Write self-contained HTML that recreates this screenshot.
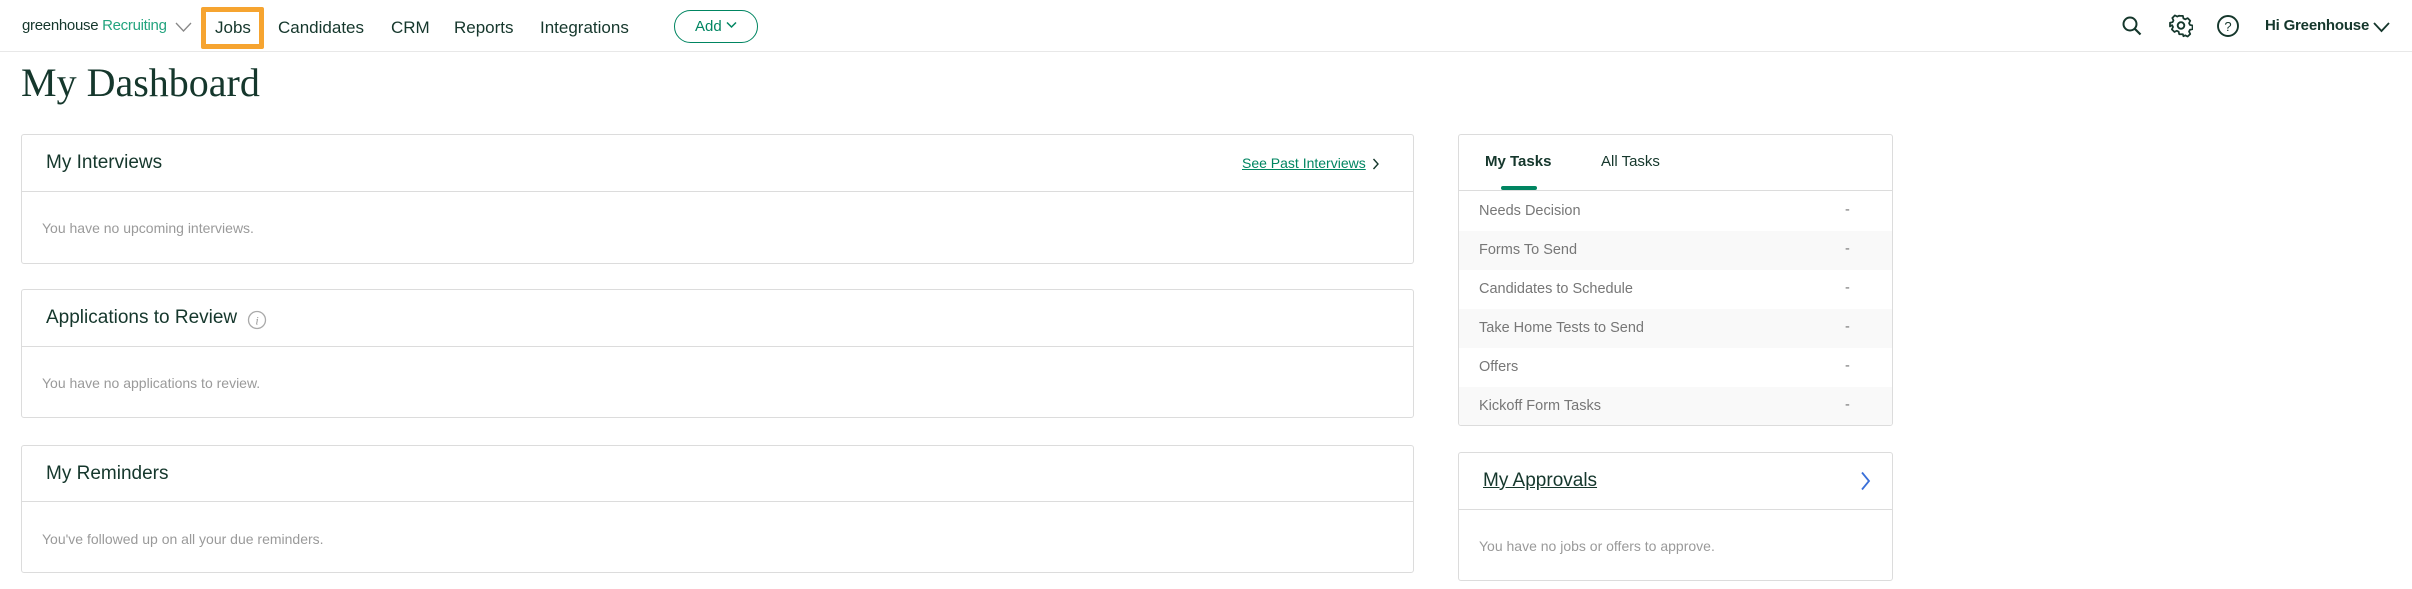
<!DOCTYPE html>
<html><head><meta charset="utf-8"><style>
*{margin:0;padding:0;box-sizing:border-box}
body{width:2412px;height:589px;background:#fff;font-family:"Liberation Sans",sans-serif;color:#15372c;position:relative;overflow:hidden}
.a{position:absolute;white-space:nowrap}
.nav{font-size:17px;top:18px;color:#15372c}
.card{position:absolute;border:1.5px solid #dcdcdc;border-radius:3px;background:#fff}
.hd{position:absolute;left:0;right:0;border-top:1.5px solid #dcdcdc}
.ttl{font-size:19px;color:#15372c}
.bt{font-size:14px;color:#9a9a9a}
.row{position:absolute;left:0;right:0;height:39px;font-size:14.5px;color:#777}
.row span{position:absolute;left:20px;top:11px}
.row b{position:absolute;left:386px;top:10px;font-weight:normal}
</style></head><body>
<div class="a" style="left:22px;top:17px;font-size:15px;letter-spacing:-0.3px"><span style="color:#15372c">greenhouse</span> <span style="color:#24a47f">Recruiting</span></div>
<svg class="a" style="left:175px;top:21px" width="17" height="12"><path d="M1 2 L8.5 10 L16 2" fill="none" stroke="#888" stroke-width="1.3"/></svg>
<div class="a" style="left:201px;top:7px;width:63px;height:42px;border:5px solid #f6a430;border-radius:2px"></div>
<div class="a nav" style="left:215px">Jobs</div>
<div class="a nav" style="left:278px">Candidates</div>
<div class="a nav" style="left:391px">CRM</div>
<div class="a nav" style="left:454px">Reports</div>
<div class="a nav" style="left:540px">Integrations</div>
<div class="a" style="left:674px;top:10px;width:84px;height:33px;border:1.5px solid #008561;border-radius:17px;color:#008561;font-size:15px;padding:7px 0 0 20px">Add <svg width="11" height="8" style="vertical-align:2px"><path d="M1 1.5 L5.5 6 L10 1.5" fill="none" stroke="#008561" stroke-width="1.5"/></svg></div>
<svg class="a" style="left:2121px;top:15px" width="22" height="22"><circle cx="9" cy="9" r="6.5" fill="none" stroke="#15372c" stroke-width="2"/><path d="M14 14 L19.5 19.5" stroke="#15372c" stroke-width="2.2"/></svg>
<svg class="a" style="left:2169px;top:14px" width="24" height="24" viewBox="0 0 24 24"><path d="M10 2h4l.6 2.8 2 1 2.6-1.3 2.8 2.8-1.3 2.6 1 2 2.8.6v4l-2.8.6-1 2 1.3 2.6-2.8 2.8-2.6-1.3-2 1L14 22h-4l-.6-2.8-2-1-2.6 1.3-2.8-2.8 1.3-2.6-1-2L0 13.5v-4l2.8-.6 1-2L2.5 4.3l2.8-2.8 2.6 1.3 2-1z" transform="translate(1 0) scale(.92)" fill="none" stroke="#15372c" stroke-width="1.9" stroke-linejoin="round"/><circle cx="12" cy="11.5" r="3.3" fill="none" stroke="#15372c" stroke-width="1.9"/></svg>
<svg class="a" style="left:2216px;top:14px" width="24" height="24"><circle cx="12" cy="12" r="10" fill="none" stroke="#15372c" stroke-width="1.9"/><text x="12" y="17" font-size="13" font-family="Liberation Sans" text-anchor="middle" fill="#15372c">?</text></svg>
<div class="a" style="left:2265px;top:17px;font-size:15px;font-weight:bold;color:#15372c;letter-spacing:-0.2px">Hi Greenhouse</div>
<svg class="a" style="left:2373px;top:21px" width="17" height="12"><path d="M1 2 L8.5 10 L16 2" fill="none" stroke="#15372c" stroke-width="1.8"/></svg>
<div class="a" style="left:0;right:0;top:51px;border-top:1px solid #e8e8e8"></div>
<div class="a" style="left:21px;top:59px;font-family:'Liberation Serif',serif;font-size:40px;color:#15372c">My Dashboard</div>

<div class="card" style="left:21px;top:134px;width:1393px;height:130px">
<div class="a ttl" style="left:24px;top:17px">My Interviews</div>
<div class="a" style="left:1220px;top:20px;font-size:14px;color:#008561;text-decoration:underline">See Past Interviews</div>
<svg class="a" style="left:1350px;top:23px" width="8" height="12"><path d="M1.5 1 L6 6 L1.5 11" fill="none" stroke="#15372c" stroke-width="1.4"/></svg>
<div class="hd" style="top:56px"></div>
<div class="a bt" style="left:20px;top:85px">You have no upcoming interviews.</div>
</div>
<div class="card" style="left:21px;top:289px;width:1393px;height:129px">
<div class="a ttl" style="left:24px;top:17px">Applications to Review</div>
<svg class="a" style="left:225px;top:20px" width="20" height="20"><circle cx="10" cy="10" r="8.5" fill="none" stroke="#aaa" stroke-width="1.3"/><text x="10" y="14.5" font-size="12" font-family="Liberation Serif" font-style="italic" text-anchor="middle" fill="#999">i</text></svg>
<div class="hd" style="top:56px"></div>
<div class="a bt" style="left:20px;top:85px">You have no applications to review.</div>
</div>
<div class="card" style="left:21px;top:445px;width:1393px;height:128px">
<div class="a ttl" style="left:24px;top:17px">My Reminders</div>
<div class="hd" style="top:55px"></div>
<div class="a bt" style="left:20px;top:85px">You've followed up on all your due reminders.</div>
</div>

<div class="card" style="left:1458px;top:134px;width:435px;height:292px;overflow:hidden">
<div class="a" style="left:26px;top:18px;font-size:15px;font-weight:bold;color:#15372c">My Tasks</div>
<div class="a" style="left:142px;top:18px;font-size:15px;color:#15372c">All Tasks</div>
<div class="a" style="left:42px;top:51px;width:36px;height:4px;background:#008561;border-radius:2px"></div>
<div class="hd" style="top:55px"></div>
<div class="row" style="top:57px"><span>Needs Decision</span><b>-</b></div>
<div class="row" style="top:96px;background:#f9f9f9"><span>Forms To Send</span><b>-</b></div>
<div class="row" style="top:135px"><span>Candidates to Schedule</span><b>-</b></div>
<div class="row" style="top:174px;background:#f9f9f9"><span>Take Home Tests to Send</span><b>-</b></div>
<div class="row" style="top:213px"><span>Offers</span><b>-</b></div>
<div class="row" style="top:252px;background:#f9f9f9"><span>Kickoff Form Tasks</span><b>-</b></div>
</div>
<div class="card" style="left:1458px;top:452px;width:435px;height:129px">
<div class="a" style="left:24px;top:17px;font-size:19px;color:#15372c;text-decoration:underline">My Approvals</div>
<svg class="a" style="left:401px;top:18px" width="12" height="20"><path d="M2 1.5 L9 10 L2 18.5" fill="none" stroke="#3a6fd8" stroke-width="1.8"/></svg>
<div class="hd" style="top:56px"></div>
<div class="a bt" style="left:20px;top:85px">You have no jobs or offers to approve.</div>
</div>
</body></html>
